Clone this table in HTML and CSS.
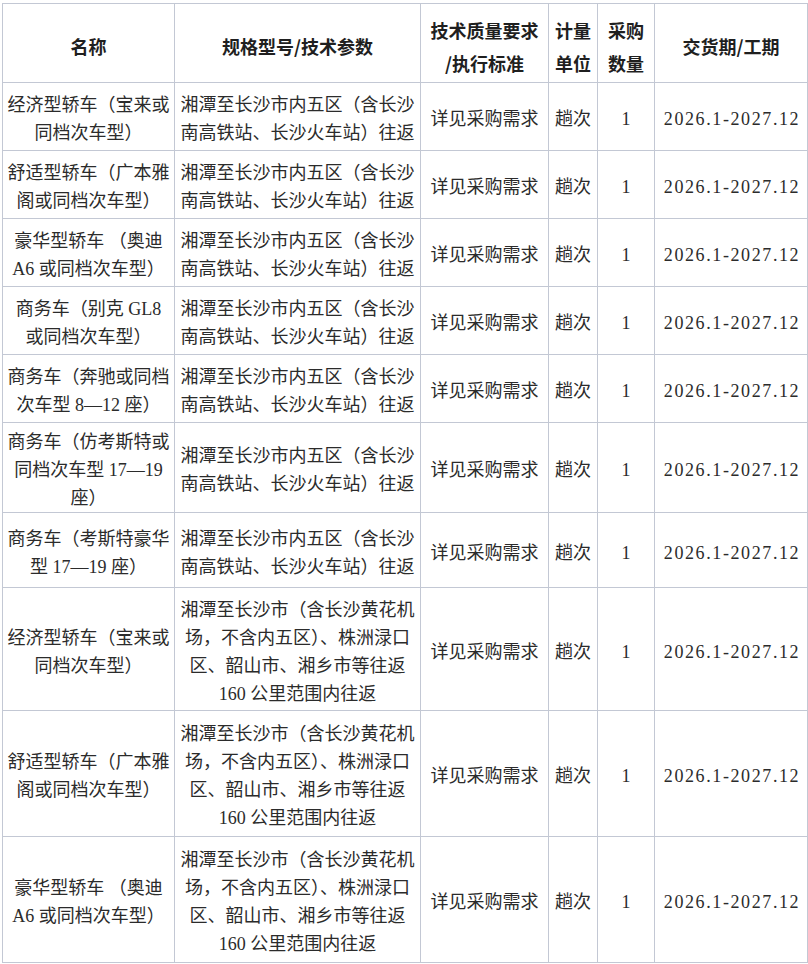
FILE: index.html
```html
<!DOCTYPE html>
<html lang="zh-CN">
<head>
<meta charset="utf-8">
<link rel="stylesheet" href="styles.css">
</head>
<body>
<table class="grid">
  <colgroup>
    <col class="c-name"><col class="c-spec"><col class="c-std"><col class="c-unit"><col class="c-qty"><col class="c-date">
  </colgroup>
  <thead>
    <tr class="head">
      <th>名称</th>
      <th>规格型号/技术参数</th>
      <th>技术质量要求<br>/执行标准</th>
      <th>计量<br>单位</th>
      <th>采购<br>数量</th>
      <th>交货期/工期</th>
    </tr>
  </thead>
  <tbody>
    <tr class="r2">
      <td>经济型轿车（宝来或<br>同档次车型）</td>
      <td>湘潭至长沙市内五区（含长沙<br>南高铁站、长沙火车站）往返</td>
      <td>详见采购需求</td><td>趟次</td><td class="num">1</td><td class="date">2026.1-2027.12</td>
    </tr>
    <tr class="r2">
      <td>舒适型轿车（广本雅<br>阁或同档次车型）</td>
      <td>湘潭至长沙市内五区（含长沙<br>南高铁站、长沙火车站）往返</td>
      <td>详见采购需求</td><td>趟次</td><td class="num">1</td><td class="date">2026.1-2027.12</td>
    </tr>
    <tr class="r2">
      <td>豪华型轿车 （奥迪<br>A6 或同档次车型）</td>
      <td>湘潭至长沙市内五区（含长沙<br>南高铁站、长沙火车站）往返</td>
      <td>详见采购需求</td><td>趟次</td><td class="num">1</td><td class="date">2026.1-2027.12</td>
    </tr>
    <tr class="r2">
      <td>商务车（别克 GL8<br>或同档次车型）</td>
      <td>湘潭至长沙市内五区（含长沙<br>南高铁站、长沙火车站）往返</td>
      <td>详见采购需求</td><td>趟次</td><td class="num">1</td><td class="date">2026.1-2027.12</td>
    </tr>
    <tr class="r2">
      <td>商务车（奔驰或同档<br>次车型 8—12 座）</td>
      <td>湘潭至长沙市内五区（含长沙<br>南高铁站、长沙火车站）往返</td>
      <td>详见采购需求</td><td>趟次</td><td class="num">1</td><td class="date">2026.1-2027.12</td>
    </tr>
    <tr class="r3">
      <td>商务车（仿考斯特或<br>同档次车型 17—19<br>座）</td>
      <td>湘潭至长沙市内五区（含长沙<br>南高铁站、长沙火车站）往返</td>
      <td>详见采购需求</td><td>趟次</td><td class="num">1</td><td class="date">2026.1-2027.12</td>
    </tr>
    <tr class="r2b">
      <td>商务车（考斯特豪华<br>型 17—19 座）</td>
      <td>湘潭至长沙市内五区（含长沙<br>南高铁站、长沙火车站）往返</td>
      <td>详见采购需求</td><td>趟次</td><td class="num">1</td><td class="date">2026.1-2027.12</td>
    </tr>
    <tr class="r4">
      <td>经济型轿车（宝来或<br>同档次车型）</td>
      <td>湘潭至长沙市（含长沙黄花机<br>场，不含内五区）、株洲渌口<br>区、韶山市、湘乡市等往返<br>160 公里范围内往返</td>
      <td>详见采购需求</td><td>趟次</td><td class="num">1</td><td class="date">2026.1-2027.12</td>
    </tr>
    <tr class="r4b">
      <td>舒适型轿车（广本雅<br>阁或同档次车型）</td>
      <td>湘潭至长沙市（含长沙黄花机<br>场，不含内五区）、株洲渌口<br>区、韶山市、湘乡市等往返<br>160 公里范围内往返</td>
      <td>详见采购需求</td><td>趟次</td><td class="num">1</td><td class="date">2026.1-2027.12</td>
    </tr>
    <tr class="r4b">
      <td>豪华型轿车 （奥迪<br>A6 或同档次车型）</td>
      <td>湘潭至长沙市（含长沙黄花机<br>场，不含内五区）、株洲渌口<br>区、韶山市、湘乡市等往返<br>160 公里范围内往返</td>
      <td>详见采购需求</td><td>趟次</td><td class="num">1</td><td class="date">2026.1-2027.12</td>
    </tr>
  </tbody>
</table>
</body>
</html>
```

FILE: styles.css
```css
html, body {
  margin: 0;
  padding: 0;
  background: #ffffff;
}

body {
  padding: 3px 0 0 2px;
  font-family: "Liberation Serif", "Noto Sans CJK SC", serif;
  font-size: 18px;
  color: #2b2b2b;
}

.grid {
  border-collapse: collapse;
  table-layout: fixed;
  width: 805px;
}

.c-name { width: 172px; }
.c-spec { width: 246px; }
.c-std { width: 128px; }
.c-unit { width: 49px; }
.c-qty { width: 57px; }
.c-date { width: 153px; }

.grid th,
.grid td {
  border: 1px solid #c3c8d4;
  padding: 0 1px;
  text-align: center;
  vertical-align: middle;
  white-space: nowrap;
  overflow: hidden;
}

.grid th {
  font-family: "Noto Sans CJK SC", sans-serif;
  font-weight: 700;
  color: #1f1f1f;
  line-height: 33px;
  padding-top: 7px;
}

.grid td {
  line-height: 28px;
  padding-top: 5px;
}

.head { height: 79px; }
.r2 { height: 68px; }
.r2b { height: 75px; }
.r3 { height: 90px; }
.r4 { height: 123px; }
.r4b { height: 126px; }

.grid td.date {
  letter-spacing: 1.6px;
  padding-left: 3px;
}
```
